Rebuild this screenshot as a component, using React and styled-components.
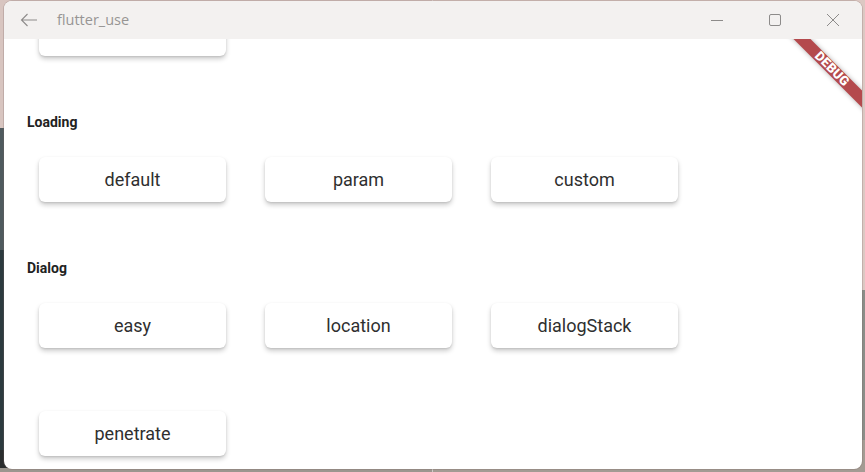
import React from "react";
import styled, { createGlobalStyle } from "styled-components";

const Global = createGlobalStyle`
  html, body {
    margin: 0;
    padding: 0;
    width: 865px;
    height: 472px;
    overflow: hidden;
  }
  body {
    background:
      linear-gradient(to bottom, #d8c5c0 0 128px, #4f5a5e 128px 250px, #2c3a3f 250px 450px, #2a2d2e 450px 468px, #9c968f 468px) left / 50% 100% no-repeat,
      linear-gradient(to bottom, #dcc8c3 0 290px, #8b8d88 290px 440px, #a39b93 440px) right / 50% 100% no-repeat;
    font-family: Roboto, "Noto Sans", sans-serif;
  }
`;

const Window = styled.div`
  margin: 1px 0 0 4px;
  width: 858px;
  height: 468px;
  border-radius: 8px;
  overflow: hidden;
  background: #fff;
  box-shadow: 0 0 0 1px rgba(120, 100, 95, 0.25);
  display: flex;
  flex-direction: column;
`;

const TitleBar = styled.div`
  height: 38px;
  flex: none;
  background: #f3f1f0;
  display: flex;
  align-items: center;
  color: #8d8b8a;
`;

const BackButton = styled.div`
  width: 46px;
  display: flex;
  justify-content: center;
  padding-left: 2px;
`;

const Title = styled.span`
  font-family: "Open Sans", "Noto Sans", sans-serif;
  font-size: 14.5px;
  color: #979594;
  margin-left: 5px;
  flex: 1;
  margin-top: -1px;
`;

const Controls = styled.div`
  display: flex;
  height: 100%;
`;

const ControlButton = styled.div`
  width: 58px;
  display: flex;
  align-items: center;
  justify-content: center;
`;

const Content = styled.div`
  position: relative;
  flex: 1;
  overflow: hidden;
`;

const Scroller = styled.div`
  margin-top: -28px;
`;

const Label = styled.div`
  padding-left: 23px;
  margin: 56px 0 25px;
  height: 20px;
  line-height: 20px;
  font-size: 14px;
  font-weight: 700;
  color: #222;
`;

const Grid = styled.div`
  display: grid;
  grid-template-columns: repeat(3, 187px);
  column-gap: 39px;
  row-gap: 63px;
  padding-left: 35px;
`;

const Button = styled.div`
  height: 45px;
  border-radius: 6px;
  background: #fff;
  box-shadow: 0 3px 5px rgba(0, 0, 0, 0.2), 0 1px 2px rgba(0, 0, 0, 0.1);
  display: flex;
  align-items: center;
  justify-content: center;
  font-size: 18px;
  color: #2f2f2f;
`;

const Banner = styled.div`
  position: absolute;
  top: 24px;
  right: -30px;
  width: 120px;
  height: 12px;
  transform: rotate(45deg);
  background: #b44a4d;
  box-shadow: 0 0 5px rgba(0, 0, 0, 0.3);
  color: #fff;
  font-family: Roboto, sans-serif;
  font-size: 13px;
  font-weight: 900;
  line-height: 12px;
  text-align: center;
  letter-spacing: 0.2px;
`;

const sections = [
  { label: null, items: [""] },
  { label: "Loading", items: ["default", "param", "custom"] },
  { label: "Dialog", items: ["easy", "location", "dialogStack", "penetrate"] },
];

export default function App() {
  return (
    <>
      <Global />
      <Window>
        <TitleBar>
          <BackButton>
            <svg width="18" height="14" viewBox="0 0 18 14" fill="none" stroke="#8d8b8a" strokeWidth="1.1">
              <path d="M17 7H1.5M7.5 1L1.5 7l6 6" />
            </svg>
          </BackButton>
          <Title>flutter_use</Title>
          <Controls>
            <ControlButton>
              <svg width="14" height="14" viewBox="0 0 14 14" stroke="#8d8b8a" strokeWidth="1">
                <path d="M1 7.5h12" />
              </svg>
            </ControlButton>
            <ControlButton>
              <svg width="14" height="14" viewBox="0 0 14 14" fill="none" stroke="#8d8b8a" strokeWidth="1">
                <rect x="1.5" y="1.5" width="11" height="11" rx="1.5" />
              </svg>
            </ControlButton>
            <ControlButton>
              <svg width="14" height="14" viewBox="0 0 14 14" stroke="#8d8b8a" strokeWidth="1">
                <path d="M1 1l12 12M13 1L1 13" />
              </svg>
            </ControlButton>
          </Controls>
        </TitleBar>
        <Content>
          <Scroller>
            {sections.map((s, i) => (
              <React.Fragment key={i}>
                {s.label && <Label>{s.label}</Label>}
                <Grid>
                  {s.items.map((t, j) => (
                    <Button key={j}>{t}</Button>
                  ))}
                </Grid>
              </React.Fragment>
            ))}
          </Scroller>
          <Banner>DEBUG</Banner>
        </Content>
      </Window>
    </>
  );
}
